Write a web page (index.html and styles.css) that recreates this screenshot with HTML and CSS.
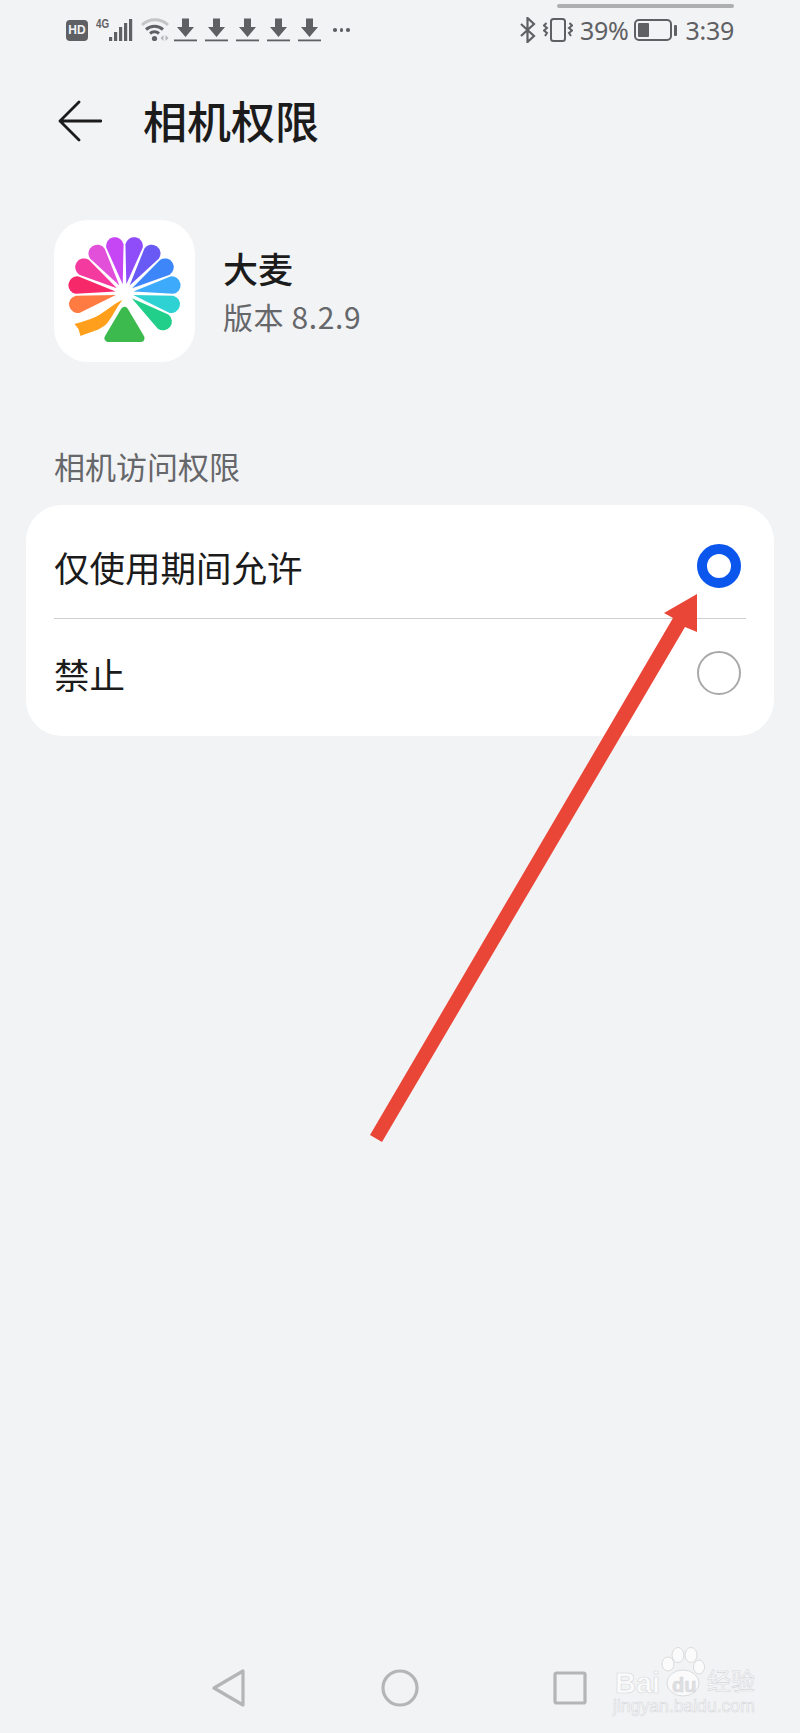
FILE: index.html
```html
<!DOCTYPE html>
<html lang="zh-CN">
<head>
    <meta charset="UTF-8">
    <meta name="viewport" content="width=device-width, initial-scale=1.0">
    <title>相机权限</title>
    <link rel="stylesheet" href="styles.css">
</head>
<body>
    <!-- Status Bar -->
    <div class="status-bar">
        <div class="status-left">
            <span class="hd-badge">HD</span>
            <span class="net-label">4G</span>
            <svg class="signal" width="24" height="24" viewBox="0 0 24 24">
                <rect x="0" y="19" width="3.200" height="4"/>
                <rect x="5" y="14" width="3.200" height="9"/>
                <rect x="10" y="9" width="3.200" height="14"/>
                <rect x="15" y="5" width="3.200" height="18"/>
                <rect x="20" y="1" width="3.200" height="22"/>
            </svg>
            <svg class="wifi" width="28" height="24" viewBox="0 0 28 24" fill="none">
                <path d="M1 7 A19 19 0 0 1 27 7" stroke="#c4c5c7" stroke-width="3"/>
                <path d="M5 11.500 A13 13 0 0 1 22 11.500" stroke="#606165" stroke-width="3"/>
                <path d="M9 15.500 A7 7 0 0 1 18 15.500" stroke="#606165" stroke-width="3"/>
                <circle cx="13.500" cy="20.500" r="2.600" fill="#606165"/>
                <path d="M19.500 20 L22.500 17 V23 Z M24.500 17 L27.500 20 L24.500 23 Z" fill="#b5b6b8"/>
            </svg>
            <div class="downloads">
                <svg width="23" height="24" viewBox="0 0 23 24"><path d="M8 0.500 H15 V9 H20 L11.500 19 L3 9 H8 Z"/><rect y="21.500" width="23" height="1.800"/></svg>
                <svg width="23" height="24" viewBox="0 0 23 24"><path d="M8 0.500 H15 V9 H20 L11.500 19 L3 9 H8 Z"/><rect y="21.500" width="23" height="1.800"/></svg>
                <svg width="23" height="24" viewBox="0 0 23 24"><path d="M8 0.500 H15 V9 H20 L11.500 19 L3 9 H8 Z"/><rect y="21.500" width="23" height="1.800"/></svg>
                <svg width="23" height="24" viewBox="0 0 23 24"><path d="M8 0.500 H15 V9 H20 L11.500 19 L3 9 H8 Z"/><rect y="21.500" width="23" height="1.800"/></svg>
                <svg width="23" height="24" viewBox="0 0 23 24"><path d="M8 0.500 H15 V9 H20 L11.500 19 L3 9 H8 Z"/><rect y="21.500" width="23" height="1.800"/></svg>
            </div>
            <div class="more-dots"><i></i><i></i><i></i></div>
        </div>
        <div class="status-right">
            <svg width="17" height="26" viewBox="0 0 17 26" fill="none" stroke="#5f6064" stroke-width="2.200">
                <path d="M2 7 L15 19 L8.500 25 V1 L15 7 L2 19"/>
            </svg>
            <svg width="30" height="24" viewBox="0 0 30 24" fill="none" stroke="#5f6064" stroke-width="2">
                <rect x="8" y="1" width="14" height="22" rx="2.500"/>
                <path d="M3.500 5 L1 7.500 L4 10 L1 12.500 L4 15 L2 18"/>
                <path d="M26.500 5 L29 7.500 L26 10 L29 12.500 L26 15 L28 18"/>
            </svg>
            <span class="battery-pct">39%</span>
            <div class="battery">
                <div class="battery-body"><div class="battery-fill"></div></div>
                <div class="battery-tip"></div>
            </div>
            <span class="clock">3:39</span>
        </div>
        <div class="top-handle"></div>
    </div>

    <!-- Header -->
    <header>
        <svg class="back" width="44" height="42" viewBox="0 0 44 42" fill="none" stroke="#1c1c1c" stroke-width="2.800" stroke-linecap="round" stroke-linejoin="round">
            <path d="M21 2 L2 21 L21 40 M2 21 H43"/>
        </svg>
        <h1>相机权限</h1>
    </header>

    <!-- App Info -->
    <div class="app-info">
        <div class="app-icon">
            <svg width="141" height="142" viewBox="-70.500 -73 141 142">
                <defs>
                    <path id="petal" d="M0 -9 L-8.800 -48 A8.800 8.800 0 0 1 8.800 -48 Z"/>
                </defs>
                <use href="#petal" fill="#f7286a" transform="rotate(-80.500)"/>
                <use href="#petal" fill="#f53a9f" transform="rotate(-57.500)"/>
                <use href="#petal" fill="#e24fd8" transform="rotate(-34.500)"/>
                <use href="#petal" fill="#c645f5" transform="rotate(-11.500)"/>
                <use href="#petal" fill="#8f4dfa" transform="rotate(11.500)"/>
                <use href="#petal" fill="#6a5af5" transform="rotate(34.500)"/>
                <use href="#petal" fill="#3c86fa" transform="rotate(57.500)"/>
                <use href="#petal" fill="#3eaafc" transform="rotate(80.500)"/>
                <use href="#petal" fill="#2fd2d2" transform="rotate(103.500)"/>
                <use href="#petal" fill="#22cf8a" transform="rotate(126.500)"/>
                <use href="#petal" fill="#ff7b42" transform="rotate(-103.500)"/>
                <path d="M-2 7 C-12 11 -22 22 -34 26 C-40 28 -46 30 -50 31 L-46 36 L-44 43 C-34 39 -24 37 -18 31 C-12 24 -8 14 -2 7 Z" fill="#ff9f1c"/>
                <path d="M0 18 L-16 45 H16 Z" fill="#3dba4e" stroke="#3dba4e" stroke-width="8" stroke-linejoin="round"/>
            </svg>
        </div>
        <div class="app-text">
            <div class="app-name">大麦</div>
            <div class="app-version">版本 8.2.9</div>
        </div>
    </div>

    <!-- Permission Options -->
    <div class="section-title">相机访问权限</div>
    <div class="card">
        <div class="option option-first">
            <span>仅使用期间允许</span>
            <span class="radio radio-on"></span>
        </div>
        <div class="option option-last">
            <span>禁止</span>
            <span class="radio"></span>
        </div>
    </div>

    <!-- Navigation Bar -->
    <nav>
        <svg width="34" height="38" viewBox="0 0 34 38" fill="none" stroke="#b4b5b7" stroke-width="3.200" stroke-linejoin="round">
            <path d="M2 19 L31 2 V36 Z"/>
        </svg>
        <svg width="38" height="38" viewBox="0 0 38 38" fill="none" stroke="#b4b5b7" stroke-width="3.200">
            <circle cx="19" cy="19" r="17"/>
        </svg>
        <svg width="34" height="34" viewBox="0 0 34 34" fill="none" stroke="#b4b5b7" stroke-width="3.200" stroke-linejoin="round">
            <rect x="2" y="2" width="30" height="30" rx="1.500"/>
        </svg>
    </nav>

    <!-- Red annotation arrow -->
    <svg class="annotation" width="800" height="1733" viewBox="0 0 800 1733">
        <path d="M370 1135 L673 618 L664 613 L697 594 L697 632 L685 627 L382 1142 Z" fill="#ea4638"/>
    </svg>

    <!-- Watermark -->
    <div class="watermark">
        <svg class="paw" width="44" height="50" viewBox="0 0 44 50" fill="#fbfbfc" stroke="#dadbdd">
            <ellipse cx="7" cy="17" rx="6" ry="7"/>
            <ellipse cx="17" cy="8" rx="6" ry="7.500"/>
            <ellipse cx="30" cy="8" rx="6" ry="7.500"/>
            <ellipse cx="38" cy="20" rx="5.500" ry="7"/>
            <ellipse cx="22" cy="36" rx="16" ry="13"/>
        </svg>
        <span class="wm-bai">Bai</span>
        <span class="wm-du">du</span>
        <span class="wm-jy">经验</span>
        <span class="wm-url">jingyan.baidu.com</span>
    </div>
</body>
</html>
```

FILE: styles.css
```css
* {
    box-sizing: border-box;
}

body {
    font-family: "Noto Sans CJK SC", "Noto Sans", sans-serif;
    margin: 0;
    width: 800px;
    height: 1733px;
    background-color: #f2f3f5;
    position: relative;
    overflow: hidden;
    display: flex;
    flex-direction: column;
}

/* status bar */
.status-bar {
    display: flex;
    justify-content: space-between;
    align-items: center;
    height: 60px;
    padding: 0 66px 0 66px;
    position: relative;
    color: #5f6064;
}

.top-handle {
    position: absolute;
    left: 557px;
    top: 4px;
    width: 177px;
    height: 4px;
    border-radius: 2px;
    background-color: #aeafb1;
}

.status-left,
.status-right {
    display: flex;
    align-items: center;
}

.hd-badge {
    width: 22px;
    height: 21px;
    border-radius: 4px;
    background-color: #5f6064;
    color: #f2f3f5;
    font-family: "Liberation Sans", sans-serif;
    font-weight: bold;
    font-size: 12px;
    line-height: 21px;
    text-align: center;
}

.net-label {
    font-family: "Liberation Sans", sans-serif;
    font-weight: bold;
    font-size: 13px;
    width: 13px;
    margin: -14px 0 0 8px;
    transform: scaleX(0.75);
    transform-origin: left;
}

.signal {
    fill: #5f6064;
}

.wifi {
    margin-left: 8px;
}

.downloads {
    display: flex;
    gap: 8px;
    margin-left: 5px;
    fill: #5f6064;
}

.more-dots {
    display: flex;
    gap: 3px;
    margin-left: 12px;
}

.more-dots i {
    width: 3.500px;
    height: 3.500px;
    border-radius: 50%;
    background-color: #5f6064;
}

.status-right svg {
    margin-right: 7px;
}

.battery-pct,
.clock {
    font-family: "Noto Sans", sans-serif;
    font-size: 25px;
    line-height: 30px;
    letter-spacing: -0.3px;
}

.battery {
    display: flex;
    align-items: center;
    gap: 2px;
    margin: 0 9px 0 5px;
}

.battery-body {
    width: 38px;
    height: 22px;
    border: 2px solid #5f6064;
    border-radius: 5px;
    padding: 2px;
}

.battery-fill {
    width: 11px;
    height: 100%;
    background-color: #5f6064;
    border-radius: 1px;
}

.battery-tip {
    width: 3px;
    height: 11px;
    background-color: #5f6064;
    border-radius: 1px;
}

/* header */
header {
    display: flex;
    align-items: center;
    height: 122px;
    padding-left: 58px;
}

.back {
    margin-right: 41px;
}

h1 {
    margin: 0 0 2px;
    font-size: 44px;
    font-weight: 500;
    color: #1b1b1b;
}

/* app info */
.app-info {
    display: flex;
    align-items: center;
    margin: 38px 0 0 54px;
}

.app-icon {
    width: 141px;
    height: 142px;
    background-color: #fff;
    border-radius: 34px;
    margin-right: 28px;
}

.app-name {
    font-size: 35px;
    font-weight: 500;
    line-height: 50px;
    color: #1b1b1b;
}

.app-version {
    font-size: 30px;
    line-height: 46px;
    letter-spacing: 0.6px;
    color: #66676a;
}

.section-title {
    margin: 82px 0 0 54px;
    font-size: 31px;
    line-height: 44px;
    color: #66676a;
}

/* option card */
.card {
    margin: 17px 26px 0;
    height: 231px;
    padding: 0 28px;
    background-color: #fff;
    border-radius: 36px;
}

.option {
    display: flex;
    justify-content: space-between;
    align-items: center;
    padding-right: 5px;
    font-size: 35.500px;
    color: #1b1b1b;
}

.option-first {
    height: 114px;
    padding-top: 9px;
    border-bottom: 1px solid #cfcfcf;
}

.option-last {
    height: 112px;
    padding-bottom: 4px;
}

.radio {
    width: 44px;
    height: 44px;
    border: 2px solid #a9a9a9;
    border-radius: 50%;
}

.radio-on {
    border: 10.500px solid #0b57ee;
}

/* nav bar */
nav {
    margin-top: auto;
    height: 90px;
    padding-left: 212px;
    display: flex;
    align-items: center;
    gap: 134.500px;
}

/* overlays */
.annotation {
    position: absolute;
    left: 0;
    top: 0;
}

.watermark {
    position: absolute;
    left: 612px;
    top: 1645px;
    width: 150px;
    height: 72px;
    color: #fbfbfc;
    font-family: "Liberation Sans", sans-serif;
}

.watermark span {
    position: absolute;
    -webkit-text-stroke: 0.6px #d6d7da;
}

.paw {
    position: absolute;
    left: 49px;
    top: 2px;
}

.wm-bai {
    left: 3px;
    top: 22px;
    font-size: 29px;
    font-weight: bold;
}

.wm-du {
    left: 60px;
    top: 29px;
    font-size: 20px;
    font-weight: bold;
    color: #dfe0e2;
}

.wm-jy {
    left: 95px;
    top: 23px;
    font-size: 24px;
    line-height: 1;
    font-family: "Noto Sans CJK SC", sans-serif;
}

.wm-url {
    left: 1px;
    top: 51px;
    font-size: 17.600px;
}
```
